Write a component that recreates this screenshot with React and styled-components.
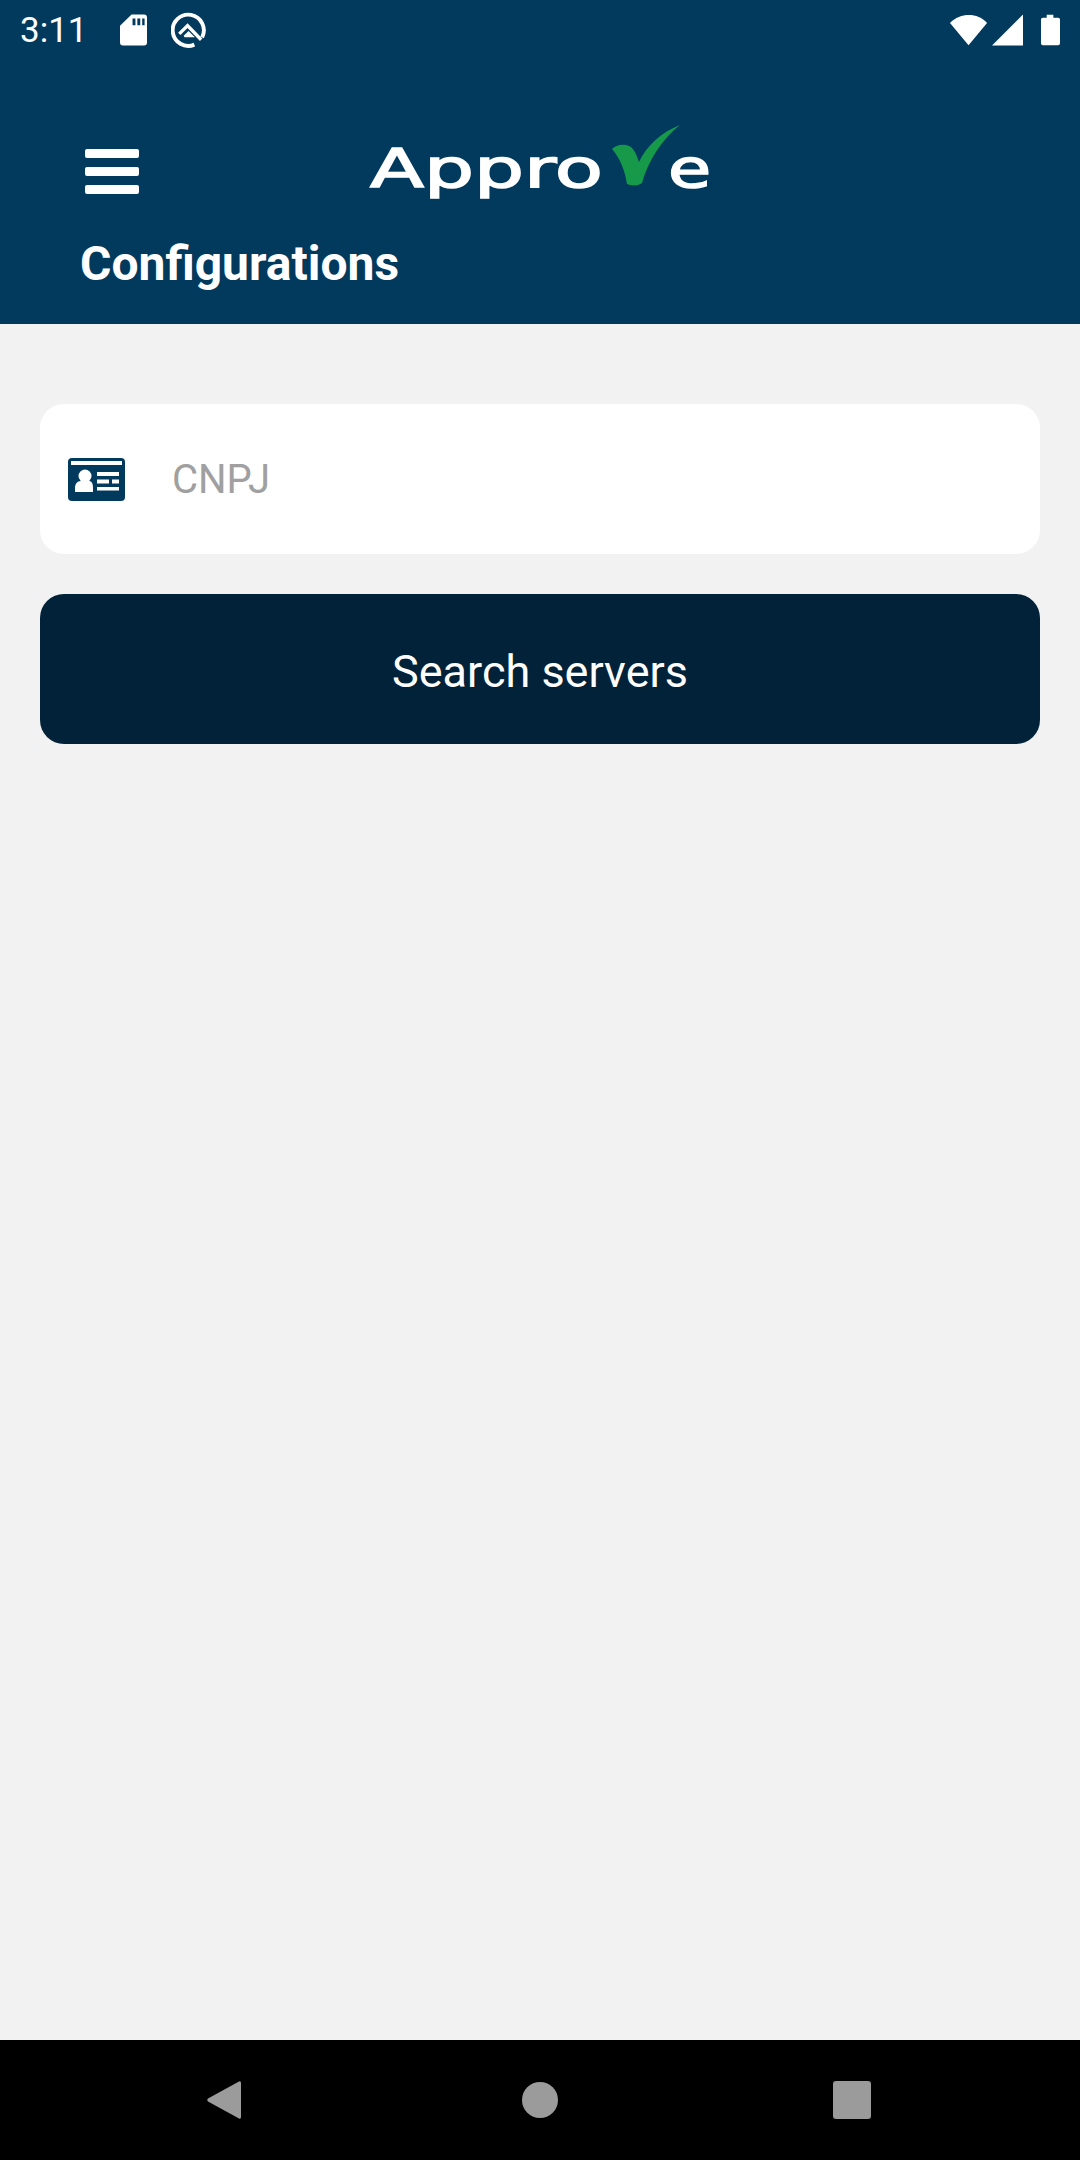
import React from 'react';
import styled, { createGlobalStyle } from 'styled-components';

const GlobalStyle = createGlobalStyle`
  html, body {
    margin: 0;
    padding: 0;
    background: #f2f2f2;
  }
  * {
    box-sizing: border-box;
  }
`;

const Screen = styled.div`
  width: 1080px;
  height: 2160px;
  display: flex;
  flex-direction: column;
  background: #f2f2f2;
  font-family: Roboto, "Liberation Sans", sans-serif;
`;

const Header = styled.header`
  height: 324px;
  background: #023a5e;
  color: #fff;
  display: flex;
  flex-direction: column;
`;

const StatusBar = styled.div`
  height: 60px;
  padding: 0 20px;
  display: flex;
  align-items: center;
`;

const Time = styled.span`
  font-size: 35px;
  width: 76px;
`;

const StatusLeft = styled.div`
  display: flex;
  align-items: center;
  gap: 24px;
`;

const StatusRight = styled.div`
  margin-left: auto;
  display: flex;
  align-items: center;
`;

const LogoRow = styled.div`
  height: 84px;
  margin-top: 57px;
  padding-left: 85px;
  display: flex;
  align-items: center;
`;

const MenuButton = styled.div`
  width: 54px;
  height: 45px;
  margin-top: 24px;
  display: flex;
  flex-direction: column;
  justify-content: space-between;
`;

const MenuBar = styled.span`
  display: block;
  height: 9px;
  border-radius: 2px;
  background: #fff;
`;

const Logo = styled.div`
  margin-left: 231px;
  display: flex;
  align-items: flex-start;
`;

const LogoWord = styled.span`
  display: block;
  width: ${(p) => p.$width}px;
  height: 84px;
  font-family: "DejaVu Sans", sans-serif;
  font-size: 54px;
  line-height: 84px;
  margin-top: 19px;
  color: #fff;
  -webkit-text-stroke: 1.5px #fff;
  transform: scaleX(${(p) => p.$stretch});
  transform-origin: left center;
  white-space: nowrap;
`;

const CheckMark = styled.svg`
  display: block;
  width: 68px;
  height: 62px;
  margin-top: 17px;
  margin-left: 9px;
  margin-right: -12px;
  position: relative;
  z-index: 1;
`;

const Title = styled.h1`
  margin: 36px 0 0 80px;
  font-size: 48px;
  line-height: 54px;
  font-weight: 700;
`;

const Main = styled.main`
  flex: 1;
  padding: 80px 40px 0;
  display: flex;
  flex-direction: column;
  gap: 40px;
`;

const Field = styled.div`
  height: 150px;
  padding-left: 28px;
  border-radius: 24px;
  background: #fff;
  display: flex;
  align-items: center;
  gap: 47px;
`;

const Placeholder = styled.span`
  font-size: 40px;
  color: #a0a0a0;
`;

const SearchButton = styled.button`
  height: 150px;
  padding: 4px 0 0;
  border: 0;
  border-radius: 24px;
  background: #012238;
  color: #fff;
  font-family: inherit;
  font-size: 45px;
`;

const NavBar = styled.nav`
  height: 120px;
  background: #000;
  display: flex;
  justify-content: center;
  align-items: center;
`;

const NavSlot = styled.div`
  width: 312px;
  display: flex;
  justify-content: center;
`;

const HomeDot = styled.span`
  display: block;
  width: 36px;
  height: 36px;
  border-radius: 50%;
  background: #9b9b9b;
`;

const RecentSquare = styled.span`
  display: block;
  width: 38px;
  height: 38px;
  border-radius: 3px;
  background: #9b9b9b;
`;

const IconSvg = styled.svg`
  display: block;
  margin-left: ${(p) => p.$left || 0}px;
  margin-right: ${(p) => p.$right || 0}px;
`;

const BackIcon = () => (
  <IconSvg width="40" height="40" viewBox="0 0 40 40" $left={-6}>
    <path d="M34 1.500a1.500 1.500 0 0 1 2 1.400v34.200a1.500 1.500 0 0 1-2 1.400L3 21.500a2 2 0 0 1 0-3z" fill="#9b9b9b" />
  </IconSvg>
);

const SdIcon = () => (
  <IconSvg width="27" height="32" viewBox="0 0 28 32">
    <path
      fill="#fff"
      fillRule="evenodd"
      d="M12 0h13a3 3 0 0 1 3 3v26a3 3 0 0 1-3 3H3a3 3 0 0 1-3-3V11.500zM13 4v7h3V4zM18 4v7h3V4zM23 4v7h2.500V4z"
    />
  </IconSvg>
);

const QIcon = () => (
  <IconSvg width="37" height="36" viewBox="0 0 38 36">
    <path d="M24 33A16 16 0 1 1 32 25.500" fill="none" stroke="#fff" strokeWidth="4" />
    <path d="M8.500 22L17 13.500 31 28" fill="none" stroke="#fff" strokeWidth="3.500" />
    <path d="M13 24l5-5 6.500 6.500H14z" fill="#fff" />
  </IconSvg>
);

const WifiIcon = () => (
  <IconSvg width="38" height="32" viewBox="0 0 40 32" $right={4}>
    <path d="M0 8.500C11 -2.500 29 -2.500 39 8.500L19.500 32z" fill="#fff" />
  </IconSvg>
);

const SignalIcon = () => (
  <IconSvg width="31" height="32" viewBox="0 0 32 32" $right={18}>
    <path d="M0 32L32 0v32z" fill="#fff" />
  </IconSvg>
);

const BatteryIcon = () => (
  <IconSvg width="19" height="32" viewBox="0 0 20 32">
    <path d="M6 0h7v3h5a2 2 0 0 1 2 2v25a2 2 0 0 1-2 2H2a2 2 0 0 1-2-2V5a2 2 0 0 1 2-2h4z" fill="#fff" />
  </IconSvg>
);

const CardIcon = () => (
  <IconSvg width="57" height="43" viewBox="0 0 57 43">
    <rect width="57" height="43" rx="4" fill="#023a5e" />
    <rect x="3" y="3" width="51" height="4" fill="#fff" />
    <circle cx="17" cy="18" r="6.500" fill="#fff" />
    <path d="M7 34v-4c0-4 2-7 6-7h8c3 0 4 3 4 7v4z" fill="#fff" />
    <rect x="29" y="14" width="22" height="4" fill="#fff" />
    <rect x="29" y="21.500" width="12" height="4" fill="#fff" />
    <rect x="44" y="21.500" width="7" height="4" fill="#fff" />
    <rect x="29" y="29" width="22" height="3.500" fill="#fff" />
  </IconSvg>
);

export default function App() {
  return (
    <Screen>
      <GlobalStyle />
      <Header>
        <StatusBar>
          <StatusLeft>
            <Time>3:11</Time>
            <SdIcon />
            <QIcon />
          </StatusLeft>
          <StatusRight>
            <WifiIcon />
            <SignalIcon />
            <BatteryIcon />
          </StatusRight>
        </StatusBar>
        <LogoRow>
          <MenuButton>
            <MenuBar />
            <MenuBar />
            <MenuBar />
          </MenuButton>
          <Logo>
            <LogoWord $width={233} $stretch={1.46}>Appro</LogoWord>
            <CheckMark viewBox="0 0 68 62">
              <path
                d="M0 24c3-3 8-5 14-4 7 1 10 8 13 17C35 20 50 7 68 0 50 14 36 36 30 58c-3 3-11 3-15 1C13 46 8 33 0 24z"
                fill="#17994a"
              />
            </CheckMark>
            <LogoWord $width={40} $stretch={1.3}>e</LogoWord>
          </Logo>
        </LogoRow>
        <Title>Configurations</Title>
      </Header>
      <Main>
        <Field>
          <CardIcon />
          <Placeholder>CNPJ</Placeholder>
        </Field>
        <SearchButton>Search servers</SearchButton>
      </Main>
      <NavBar>
        <NavSlot>
          <BackIcon />
        </NavSlot>
        <NavSlot>
          <HomeDot />
        </NavSlot>
        <NavSlot>
          <RecentSquare />
        </NavSlot>
      </NavBar>
    </Screen>
  );
}
